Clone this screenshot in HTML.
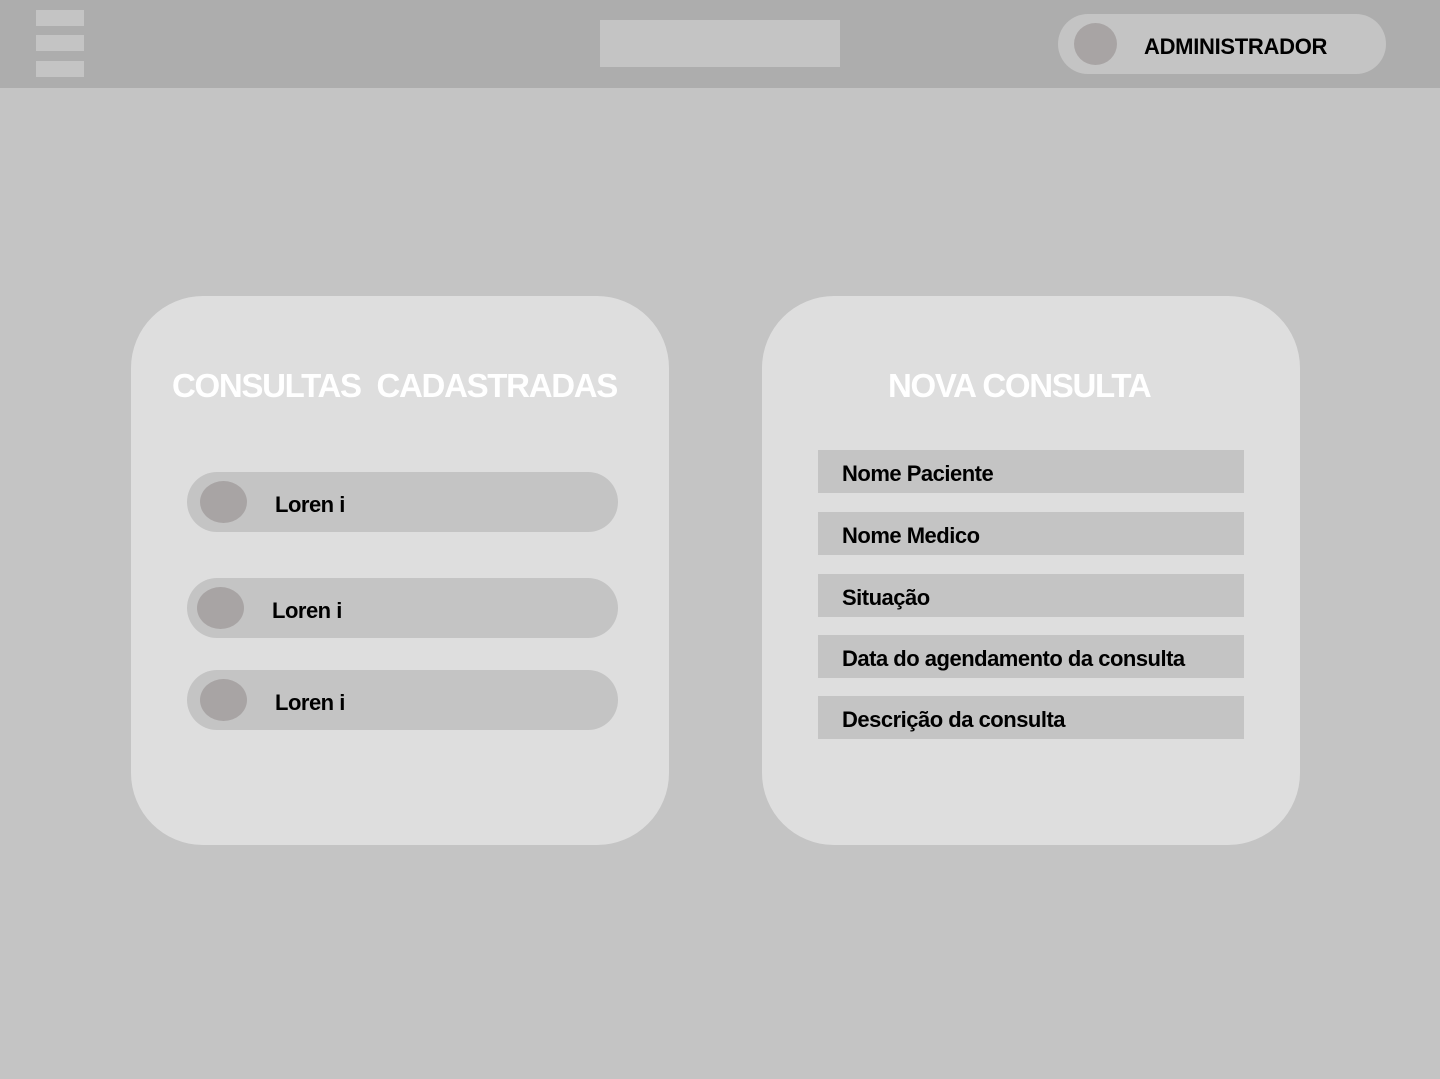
<!DOCTYPE html>
<html><head><meta charset="utf-8"><style>
*{margin:0;padding:0;box-sizing:border-box}
body{width:1440px;height:1079px;background:#c4c4c4;font-family:"Liberation Sans",sans-serif;position:relative;overflow:hidden}
.hdr{position:absolute;left:0;top:0;width:1440px;height:88px;background:#adadad}
.bar{position:absolute;left:36px;width:48px;height:16px;background:#c4c4c4}
.abs{position:absolute}
.card{position:absolute;top:296px;width:538px;height:549px;background:#dedede;border-radius:72px}
.title{position:absolute;top:367px;color:#fff;font-weight:bold;font-size:33px;letter-spacing:-1.3px;white-space:nowrap}
.pill{position:absolute;left:187px;width:431px;height:60px;background:#c4c4c4;border-radius:30px}
.circ{position:absolute;width:47px;height:42px;border-radius:50%;background:#a8a4a4;top:9px}
.pill span{position:absolute;top:20px;font-size:22px;font-weight:bold;letter-spacing:-0.5px}
.fld{position:absolute;left:818px;width:426px;height:43px;background:#c4c4c4;font-size:22px;font-weight:bold;padding:11px 0 0 24px;letter-spacing:-0.5px;white-space:nowrap}
</style></head><body>
<div class="hdr">
<div class="bar" style="top:10px"></div>
<div class="bar" style="top:35px"></div>
<div class="bar" style="top:61px"></div>
<div class="abs" style="left:600px;top:20px;width:240px;height:47px;background:#c4c4c4"></div>
<div class="abs" style="left:1058px;top:14px;width:328px;height:60px;background:#c4c4c4;border-radius:30px">
<div class="abs" style="left:16px;top:9px;width:43px;height:42px;border-radius:50%;background:#a8a4a4"></div>
<div class="abs" style="left:86px;top:20px;font-size:22px;font-weight:bold;letter-spacing:-0.3px">ADMINISTRADOR</div>
</div>
</div>
<div class="card" style="left:131px"></div>
<div class="card" style="left:762px"></div>
<div class="title" style="left:172px">CONSULTAS&nbsp; CADASTRADAS</div>
<div class="title" style="left:888px">NOVA CONSULTA</div>
<div class="pill" style="top:472px"><div class="circ" style="left:13px"></div><span style="left:88px">Loren i</span></div>
<div class="pill" style="top:578px"><div class="circ" style="left:10px"></div><span style="left:85px">Loren i</span></div>
<div class="pill" style="top:670px"><div class="circ" style="left:13px"></div><span style="left:88px">Loren i</span></div>
<div class="fld" style="top:450px">Nome Paciente</div>
<div class="fld" style="top:512px">Nome Medico</div>
<div class="fld" style="top:574px">Situação</div>
<div class="fld" style="top:635px">Data do agendamento da consulta</div>
<div class="fld" style="top:696px">Descrição da consulta</div>
</body></html>
